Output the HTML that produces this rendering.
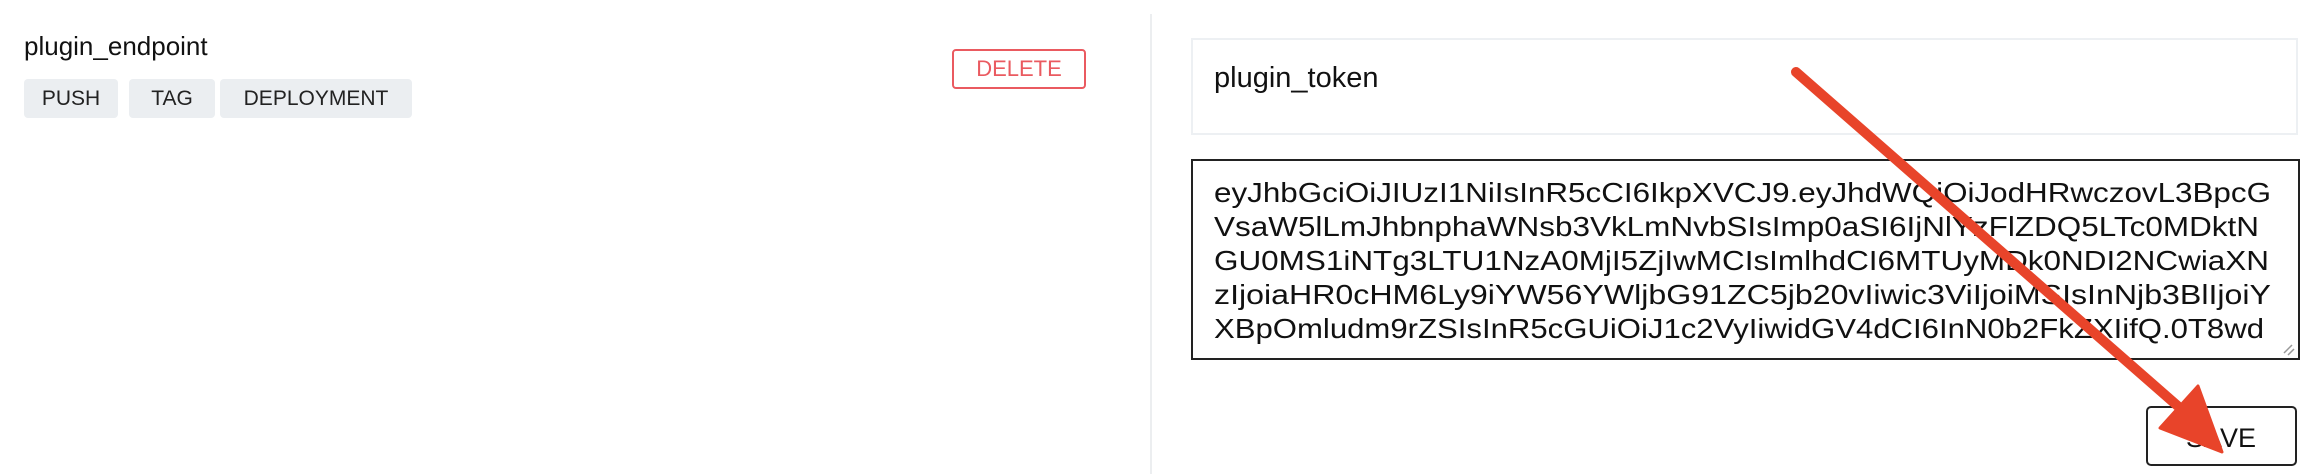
<!DOCTYPE html>
<html><head><meta charset="utf-8"><style>
html,body{margin:0;padding:0;width:2304px;height:474px;overflow:hidden;background:#fff;font-family:"Liberation Sans",Arial,sans-serif;color:#111;}
.abs{position:absolute;}
.tag{position:absolute;top:79px;height:39px;background:#ebeef1;border-radius:4px;font-size:21px;line-height:39px;text-align:center;color:#222;}
</style></head><body>
<div class="abs" style="left:24px;top:29px;font-size:26px;line-height:34px;">plugin_endpoint</div>
<div class="tag" style="left:24px;width:94px;">PUSH</div>
<div class="tag" style="left:129px;width:86px;">TAG</div>
<div class="tag" style="left:220px;width:192px;">DEPLOYMENT</div>
<div class="abs" style="left:952px;top:49px;width:130px;height:36px;border:2px solid #ea5a60;border-radius:4px;color:#ea5a60;font-size:22px;line-height:36px;text-align:center;">DELETE</div>
<div class="abs" style="left:1150px;top:14px;width:2px;height:460px;background:#eceef0;"></div>
<div class="abs" style="left:1191px;top:38px;width:1103px;height:93px;border:2px solid #edf0f3;"></div>
<div class="abs" style="left:1214px;top:59px;font-size:29px;line-height:38px;">plugin_token</div>
<div class="abs" style="left:1191px;top:159px;width:1105px;height:197px;border:2px solid #222;overflow:hidden;"></div>
<svg class="abs" style="left:0;top:0" width="2304" height="474">
<defs><clipPath id="c"><rect x="1193" y="161" width="1105" height="197"/></clipPath></defs>
<g clip-path="url(#c)" font-family="Liberation Sans,Arial,sans-serif" font-size="28" fill="#111">
<text x="1214" y="202" textLength="1057" lengthAdjust="spacingAndGlyphs">eyJhbGciOiJIUzI1NiIsInR5cCI6IkpXVCJ9.eyJhdWQiOiJodHRwczovL3BpcG</text>
<text x="1214" y="236" textLength="1045" lengthAdjust="spacingAndGlyphs">VsaW5lLmJhbnphaWNsb3VkLmNvbSIsImp0aSI6IjNlYzFlZDQ5LTc0MDktN</text>
<text x="1214" y="270" textLength="1055" lengthAdjust="spacingAndGlyphs">GU0MS1iNTg3LTU1NzA0MjI5ZjIwMCIsImlhdCI6MTUyMDk0NDI2NCwiaXN</text>
<text x="1214" y="304" textLength="1057" lengthAdjust="spacingAndGlyphs">zIjoiaHR0cHM6Ly9iYW56YWljbG91ZC5jb20vIiwic3ViIjoiMSIsInNjb3BlIjoiY</text>
<text x="1214" y="338" textLength="1050" lengthAdjust="spacingAndGlyphs">XBpOmludm9rZSIsInR5cGUiOiJ1c2VyIiwidGV4dCI6InN0b2FkZXIifQ.0T8wd</text>
</g>
<path d="M2284 353 L2292 345 M2288 355 L2294 349" stroke="#999" stroke-width="1.5"/>
<rect x="2147" y="407" width="149" height="58" rx="4" fill="none" stroke="#222" stroke-width="2"/>
<text x="2221" y="447" text-anchor="middle" font-family="Liberation Sans,Arial,sans-serif" font-size="27" fill="#111">SAVE</text>
<line x1="1796" y1="72" x2="2180" y2="408" stroke="#e8442a" stroke-width="10" stroke-linecap="round"/>
<polygon points="2222,452 2160,428 2198,386" fill="#e8442a" stroke="#e8442a" stroke-width="3" stroke-linejoin="round"/>
</svg>
</body></html>
